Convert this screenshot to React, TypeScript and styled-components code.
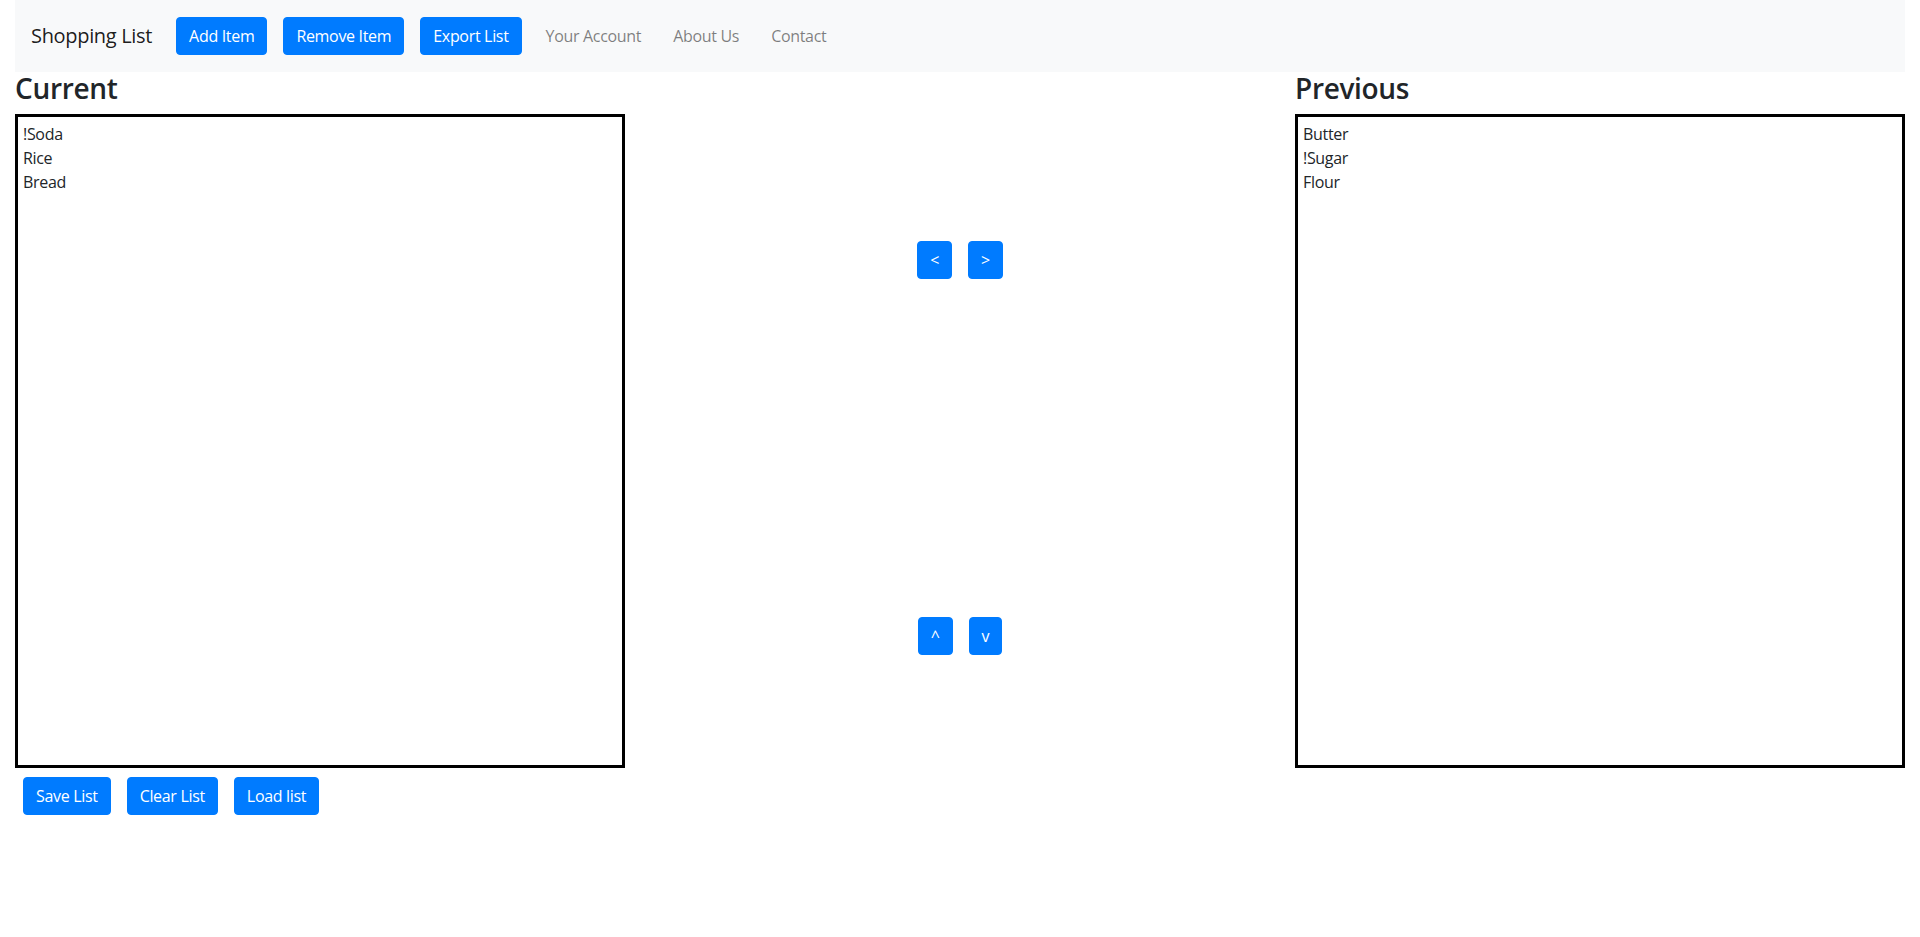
import React from 'react'
import styled, {createGlobalStyle} from 'styled-components'

const GlobalStyle = createGlobalStyle`
    * {
        box-sizing: border-box;
    }
    body {
        margin: 0;
        font-family: "Open Sans", "Noto Sans", sans-serif;
        font-size: 16px;
        line-height: 1.5;
        letter-spacing: -0.02em;
        color: #212529;
        background: #fff;
    }
`

const current = ['!Soda', 'Rice', 'Bread']
const previous = ['Butter', '!Sugar', 'Flour']

export default function App() {
    return (
        <>
            <GlobalStyle/>
            <Page>
                <Navbar>
                    <Brand>Shopping List</Brand>
                    <Button>Add Item</Button>
                    <Button>Remove Item</Button>
                    <Button>Export List</Button>
                    <NavList>
                        <NavItem><NavLink>Your Account</NavLink></NavItem>
                        <NavItem><NavLink>About Us</NavLink></NavItem>
                        <NavItem><NavLink>Contact</NavLink></NavItem>
                    </NavList>
                </Navbar>
                <Main>
                    <Column>
                        <Heading>Current</Heading>
                        <ListBox>
                            {current.map(item => <ListItem key={item}>{item}</ListItem>)}
                        </ListBox>
                        <ButtonRow>
                            <Button>Save List</Button>
                            <Button>Clear List</Button>
                            <Button>Load list</Button>
                        </ButtonRow>
                    </Column>
                    <Middle>
                        <ArrowRow>
                            <Button>&lt;</Button>
                            <Button>&gt;</Button>
                        </ArrowRow>
                        <ArrowRow $top={338}>
                            <Button>^</Button>
                            <Button>v</Button>
                        </ArrowRow>
                    </Middle>
                    <Column>
                        <Heading>Previous</Heading>
                        <ListBox>
                            {previous.map(item => <ListItem key={item}>{item}</ListItem>)}
                        </ListBox>
                    </Column>
                </Main>
            </Page>
        </>
    )
}

const Page = styled.div`
    padding: 0 15px;
`

const Navbar = styled.nav`
    display: flex;
    align-items: center;
    height: 72px;
    padding: 0 16px;
    background-color: #f8f9fa;
`

const Brand = styled.span`
    font-size: 20px;
    line-height: 30px;
    padding: 5px 0;
    margin-right: 16px;
    color: rgba(0, 0, 0, 0.9);
    white-space: nowrap;
`

const Button = styled.button`
    font-family: inherit;
    font-size: 16px;
    line-height: 1.5;
    letter-spacing: inherit;
    color: #fff;
    background-color: #007bff;
    border: 1px solid #007bff;
    border-radius: 4px;
    padding: 6px 12px;
    margin: 0 8px;
    cursor: pointer;
    white-space: nowrap;

    &:hover {
        background-color: #0069d9;
    }
`

const NavList = styled.ul`
    display: flex;
    list-style: none;
    margin: 0;
    padding: 0;
`

const NavItem = styled.li``

const NavLink = styled.a`
    display: block;
    padding: 8px 16px;
    color: rgba(0, 0, 0, 0.5);
    cursor: pointer;
`

const Main = styled.div`
    display: flex;
`

const Column = styled.section`
    width: 610px;
    flex-shrink: 0;
`

const Heading = styled.h3`
    margin: 0 0 8px;
    font-size: 28px;
    font-weight: 600;
    line-height: 1.2;
`

const ListBox = styled.ul`
    height: 654px;
    margin: 0;
    padding: 5px 5px;
    list-style: none;
    border: 3px solid #000;
`

const ListItem = styled.li`
    line-height: 24px;
`

const ButtonRow = styled.div`
    display: flex;
    margin-top: 9px;
`

const Middle = styled.div`
    flex: 1;
    display: flex;
    flex-direction: column;
    align-items: center;
    padding-top: 169px;
`

const ArrowRow = styled.div<{$top?: number}>`
    display: flex;
    margin-top: ${p => p.$top ?? 0}px;
`
